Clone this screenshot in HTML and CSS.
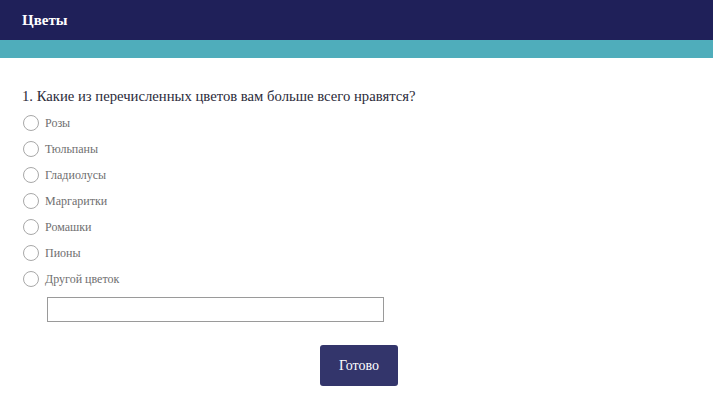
FILE: index.html
```html
<!DOCTYPE html>
<html lang="ru">
<head>
    <meta charset="UTF-8">
    <title>Цветы</title>
    <link rel="stylesheet" href="styles.css">
</head>
<body>

<header class="top-bar">
    <h1>Цветы</h1>
</header>
<div class="stripe"></div>

<section class="survey">
    <p class="question">1. Какие из перечисленных цветов вам больше всего нравятся?</p>

    <label class="option"><span class="radio"></span>Розы</label>
    <label class="option"><span class="radio"></span>Тюльпаны</label>
    <label class="option"><span class="radio"></span>Гладиолусы</label>
    <label class="option"><span class="radio"></span>Маргаритки</label>
    <label class="option"><span class="radio"></span>Ромашки</label>
    <label class="option"><span class="radio"></span>Пионы</label>
    <label class="option"><span class="radio"></span>Другой цветок</label>

    <input type="text" class="other-input">

    <div class="actions">
        <button class="done-button">Готово</button>
    </div>
</section>

</body>
</html>
```

FILE: styles.css
```css
body {
    font-family: "Liberation Serif", "DejaVu Serif", serif;
    margin: 0;
    padding: 0;
    background-color: #fff;
}

.top-bar {
    background-color: #1f2059;
    color: #fff;
    height: 40px;
    display: flex;
    align-items: center;
    padding: 0 22px;
}

.top-bar h1 {
    margin: 0;
    font-size: 15px;
    font-weight: bold;
}

.stripe {
    background-color: #4fadbb;
    height: 18px;
}

.survey {
    padding: 30px 22px 0;
    display: flex;
    flex-direction: column;
}

.question {
    margin: 0 0 5px;
    font-size: 14.7px;
    color: #2b2b3a;
}

.option {
    display: flex;
    align-items: center;
    height: 26px;
    font-size: 12px;
    color: #6f6f6f;
}

.radio {
    width: 14px;
    height: 14px;
    border: 1px solid #a8a8a8;
    border-radius: 50%;
    margin-right: 6px;
    margin-left: 1px;
}

.other-input {
    width: 337px;
    height: 25px;
    margin: 5px 0 0 25px;
    border: 1px solid #9a9a9a;
    box-sizing: border-box;
}

.actions {
    display: flex;
    justify-content: center;
    margin-top: 23px;
    padding-left: 5px;
}

.done-button {
    width: 78px;
    height: 41px;
    font-family: inherit;
    font-size: 14px;
    background-color: #33356b;
    color: #fff;
    border: none;
    border-radius: 3px;
}
```
